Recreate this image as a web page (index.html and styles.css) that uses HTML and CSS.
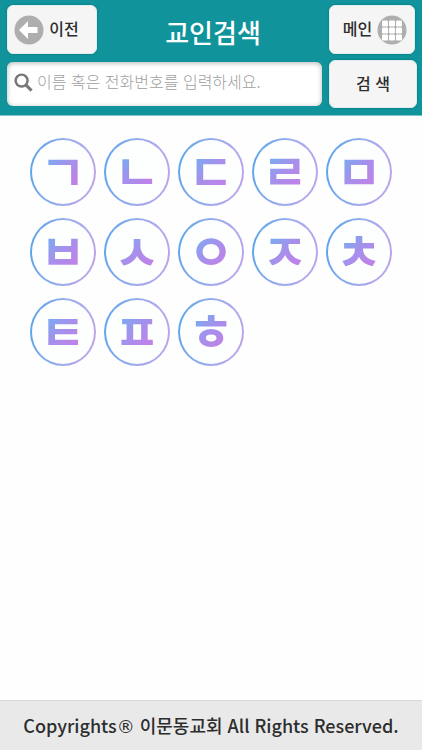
FILE: index.html
```html
<!DOCTYPE html>
<html lang="ko">
<head>
<meta charset="utf-8">
<meta name="viewport" content="width=device-width, initial-scale=1">
<title>교인검색</title>
<link rel="stylesheet" href="styles.css">
</head>
<body>
<header class="header">
  <div class="bar">
    <button class="btn btn-nav" type="button">
      <svg class="round-icon" viewBox="0 0 30 30" aria-hidden="true"><circle cx="15" cy="15" r="14.5" fill="#aeaeae"/><path d="M5 15L14 6V12H23.500V18H14V24Z" fill="#fff"/></svg>
      <span class="label">이전</span>
    </button>
    <h1 class="title">교인검색</h1>
    <button class="btn btn-nav btn-main" type="button">
      <span class="label">메인</span>
      <svg class="round-icon" viewBox="0 0 30 30" aria-hidden="true"><circle cx="15" cy="15" r="14.5" fill="#aeaeae"/><g fill="#fff"><rect x="5" y="5.500" width="6" height="6" rx="1"/><rect x="12" y="5.500" width="6" height="6" rx="1"/><rect x="19" y="5.500" width="6" height="6" rx="1"/><rect x="5" y="12.500" width="6" height="6" rx="1"/><rect x="12" y="12.500" width="6" height="6" rx="1"/><rect x="19" y="12.500" width="6" height="6" rx="1"/><rect x="5" y="19.500" width="6" height="6" rx="1"/><rect x="12" y="19.500" width="6" height="6" rx="1"/><rect x="19" y="19.500" width="6" height="6" rx="1"/></g></svg>
    </button>
  </div>
  <form class="search">
    <label class="field">
      <svg class="lens" viewBox="0 0 20 20" aria-hidden="true"><circle cx="8" cy="8" r="6.300" fill="none" stroke="#777" stroke-width="2.600"/><path d="M12.500 12.500L18.500 18.500" stroke="#777" stroke-width="3.200"/></svg>
      <input class="input" type="text" aria-label="이름 혹은 전화번호" placeholder="이름 혹은 전화번호를 입력하세요.">
    </label>
    <button class="btn btn-search" type="button"><span class="label">검 색</span></button>
  </form>
</header>
<main class="main">
  <nav class="letters" aria-label="초성">
    <a class="letter" href="#"><span>ㄱ</span></a>
    <a class="letter" href="#"><span>ㄴ</span></a>
    <a class="letter" href="#"><span>ㄷ</span></a>
    <a class="letter" href="#"><span>ㄹ</span></a>
    <a class="letter" href="#"><span>ㅁ</span></a>
    <a class="letter" href="#"><span>ㅂ</span></a>
    <a class="letter" href="#"><span>ㅅ</span></a>
    <a class="letter" href="#"><span>ㅇ</span></a>
    <a class="letter" href="#"><span>ㅈ</span></a>
    <a class="letter" href="#"><span>ㅊ</span></a>
    <a class="letter" href="#"><span>ㅌ</span></a>
    <a class="letter" href="#"><span>ㅍ</span></a>
    <a class="letter" href="#"><span>ㅎ</span></a>
  </nav>
</main>
<footer class="footer">Copyrights<span class="mark">®</span> 이문동교회 All Rights Reserved.</footer>
</body>
</html>
```
FILE: styles.css
```css
* {
  box-sizing: border-box;
}

body {
  margin: 0;
  min-height: 100vh;
  display: flex;
  flex-direction: column;
  background: #fefefe;
  color: #2d2d2d;
  font-family: "Noto Sans CJK KR", sans-serif;
}

.header {
  display: flex;
  flex-direction: column;
  gap: 6px;
  padding: 5px 5px 7px 7px;
  background: #10939a;
  border-bottom: 1px solid #7fc4c8;
}

.bar {
  display: flex;
  align-items: center;
  justify-content: space-between;
  padding-right: 2px;
}

.title {
  margin: 0;
  padding-top: 4px;
  color: #fff;
  font-size: 26px;
  font-weight: 500;
  line-height: 44px;
}

.btn {
  display: flex;
  align-items: center;
  justify-content: center;
  border: 1px solid #dceeee;
  border-radius: 6px;
  background: #f5f5f5;
  box-shadow: 0 0 2px #0b6a70;
  color: #2d2d2d;
  font-family: inherit;
  font-size: 16px;
  font-weight: 500;
  line-height: 24px;
}

.label {
  padding-bottom: 3px;
}

.btn-nav {
  width: 90px;
  height: 49px;
  padding: 0 11px 0 0;
  gap: 5px;
}

.btn-main {
  width: 86px;
  padding: 0 0 0 6px;
}

.round-icon {
  width: 30px;
  height: 30px;
  flex: none;
}

.search {
  display: flex;
  align-items: center;
  gap: 7px;
}

.field {
  flex: 1;
  min-width: 0;
  height: 44px;
  display: flex;
  align-items: center;
  gap: 4px;
  padding: 0 7px 3px;
  border-radius: 6px;
  background: #fff;
  box-shadow: inset 0 1px 5px #b5b5b5;
}

.lens {
  width: 19px;
  height: 19px;
  flex: none;
}

.input {
  flex: 1;
  min-width: 0;
  padding: 0 0 3px;
  border: 0;
  outline: 0;
  background: transparent;
  color: #333;
  font-family: inherit;
  font-size: 16px;
  font-weight: 300;
  line-height: 24px;
}

.input::placeholder {
  color: #a0a0a0;
  opacity: 1;
}

.btn-search {
  width: 88px;
  height: 48px;
  padding: 0;
}

.main {
  flex: 1;
  padding: 22px 30px;
}

.letters {
  display: grid;
  grid-template-columns: repeat(5, 66px);
  justify-content: space-between;
  row-gap: 12px;
}

.letter {
  height: 68px;
  display: flex;
  align-items: center;
  justify-content: center;
  padding-bottom: 6px;
  border: 2px solid transparent;
  border-radius: 50%;
  background:
    linear-gradient(#fdfefe, #fdfefe) padding-box,
    linear-gradient(100deg, #55a5e8, #9bacef 50%, #c2a4ec) border-box;
  text-decoration: none;
}

.letter span {
  background: linear-gradient(135deg, #7baaf0 25%, #a491ec 50%, #bd83e8 75%);
  background-clip: text;
  -webkit-background-clip: text;
  color: transparent;
  font-size: 50px;
  font-weight: 700;
  line-height: 52px;
}

.footer {
  padding: 10px 0 11px;
  border-top: 1px solid #d8d8d8;
  background: #e9e9e9;
  font-size: 18px;
  font-weight: 500;
  line-height: 28px;
  text-align: center;
  white-space: nowrap;
}

.mark {
  font-family: "DejaVu Sans", sans-serif;
  font-weight: 400;
  line-height: 1;
}
```
